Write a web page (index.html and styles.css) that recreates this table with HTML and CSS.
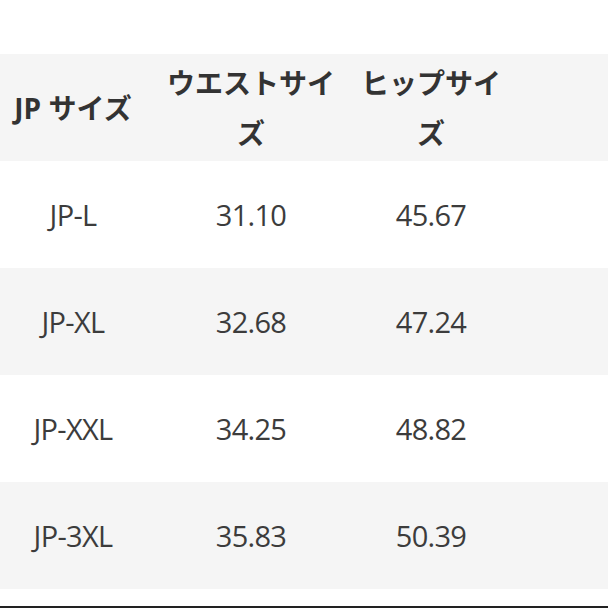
FILE: index.html
```html
<!DOCTYPE html>
<html lang="ja">
<head>
<meta charset="utf-8">
<link rel="stylesheet" href="styles.css">
</head>
<body>
<div class="page">
  <table class="size-table">
    <colgroup>
      <col class="c1"><col class="c2"><col class="c3">
    </colgroup>
    <thead>
      <tr><th>JP サイズ</th><th>ウエストサイズ</th><th>ヒップサイズ</th></tr>
    </thead>
    <tbody>
      <tr><td>JP-L</td><td>31.10</td><td>45.67</td></tr>
      <tr><td>JP-XL</td><td>32.68</td><td>47.24</td></tr>
      <tr><td>JP-XXL</td><td>34.25</td><td>48.82</td></tr>
      <tr><td>JP-3XL</td><td>35.83</td><td>50.39</td></tr>
    </tbody>
  </table>
  <div class="bottom-bar"></div>
</div>
</body>
</html>
```
FILE: styles.css
```css
html, body {
  margin: 0;
  padding: 0;
  background: #ffffff;
}
.page {
  width: 608px;
  height: 608px;
  padding-top: 54px;
  box-sizing: border-box;
  display: flex;
  flex-direction: column;
}
.size-table {
  width: 608px;
  table-layout: fixed;
  border-collapse: collapse;
  font-family: "Open Sans", "Noto Sans CJK JP", sans-serif;
  color: #3c3c3c;
}
.c1 { width: 146px; }
.c2 { width: 210px; }
.c3 { width: 252px; }
.size-table th,
.size-table td {
  height: 107px;
  padding: 0;
  text-align: center;
  vertical-align: middle;
}
.size-table th {
  font-family: "Open Sans", "Noto Sans CJK JP", sans-serif;
  font-weight: 700;
  font-size: 28px;
  line-height: 50px;
  color: #333333;
}
.size-table td {
  font-size: 29px;
  line-height: 36px;
  font-weight: 400;
  letter-spacing: -0.7px;
}
.size-table th:nth-child(1),
.size-table td:nth-child(1) { padding: 0 8px; }
.size-table th:nth-child(2),
.size-table td:nth-child(2) { padding: 0 17px; }
.size-table th:nth-child(3),
.size-table td:nth-child(3) { padding: 0 102px 0 0; }
.size-table thead tr,
.size-table tbody tr:nth-child(even) {
  background: #f5f5f5;
}
.bottom-bar {
  margin-top: auto;
  margin-bottom: 0;
  height: 2px;
  background: #222222;
}
```
